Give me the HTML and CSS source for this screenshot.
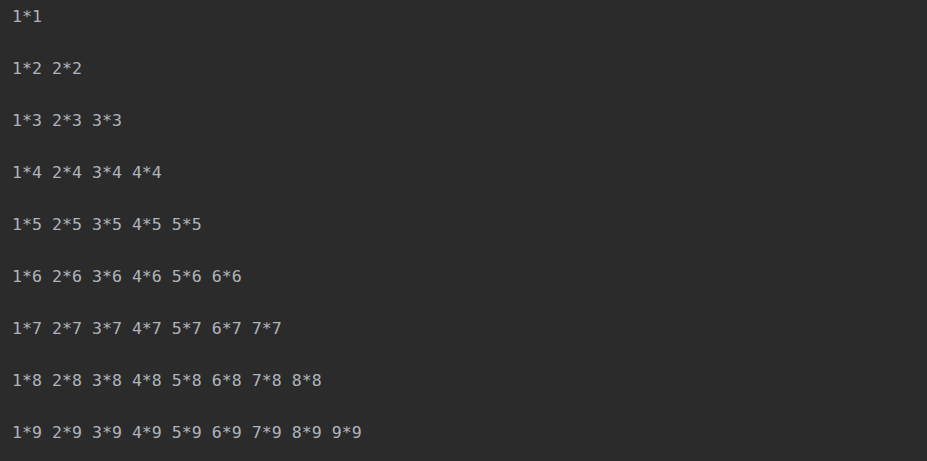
FILE: index.html
```html
<!DOCTYPE html>
<html>
<head>
<meta charset="utf-8">
<link rel="stylesheet" href="styles.css">
</head>
<body>
<div class="console">
<div class="row">1*1</div>
<div class="row">1*2 2*2</div>
<div class="row">1*3 2*3 3*3</div>
<div class="row">1*4 2*4 3*4 4*4</div>
<div class="row">1*5 2*5 3*5 4*5 5*5</div>
<div class="row">1*6 2*6 3*6 4*6 5*6 6*6</div>
<div class="row">1*7 2*7 3*7 4*7 5*7 6*7 7*7</div>
<div class="row">1*8 2*8 3*8 4*8 5*8 6*8 7*8 8*8</div>
<div class="row">1*9 2*9 3*9 4*9 5*9 6*9 7*9 8*9 9*9</div>
</div>
</body>
</html>
```
FILE: styles.css
```css
html, body {
  margin: 0;
  padding: 0;
  background: #2b2b2b;
  height: 100%;
}
.console {
  padding: 4px 0 0 12px;
  font-family: "DejaVu Sans Mono", monospace;
  font-size: 16.6px;
  color: #aeb4bb;
}
.row {
  white-space: pre;
  line-height: 26px;
  height: 52px;
}
```
